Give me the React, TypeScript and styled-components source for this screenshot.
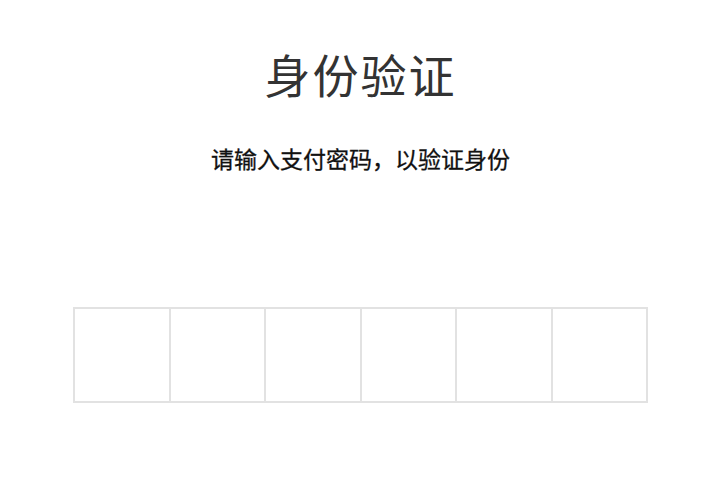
import React from "react";
import styled, { createGlobalStyle } from "styled-components";

const Global = createGlobalStyle`
  html, body { margin: 0; padding: 0; background: #fff; }
  body { font-family: "PingFang SC", "Noto Sans CJK SC", "Noto Sans", sans-serif; }
`;

const Page = styled.div`
  display: flex;
  flex-direction: column;
  align-items: center;
  padding: 46px 0 0 11px;
`;

const Title = styled.h1`
  margin: 0;
  font-size: 46px;
  line-height: 54px;
  font-weight: 400;
  color: #333;
  letter-spacing: 2px;
`;

const Subtitle = styled.p`
  margin: 42px 0 0;
  font-size: 23px;
  line-height: 32px;
  font-weight: 400;
  color: #111;
  -webkit-text-stroke: 0.3px #111;
`;

const Boxes = styled.div`
  margin-top: 133px;
  width: 575px;
  box-sizing: border-box;
  display: grid;
  grid-template-columns: repeat(6, 1fr);
  gap: 2px;
  padding: 2px;
  background: #e2e2e2;
`;

const Cell = styled.div`
  height: 92px;
  background: #fff;
`;

export default function App() {
  return (
    <>
      <Global />
      <Page>
        <Title>身份验证</Title>
        <Subtitle>请输入支付密码，以验证身份</Subtitle>
        <Boxes>
          {Array.from({ length: 6 }).map((_, i) => (
            <Cell key={i} />
          ))}
        </Boxes>
      </Page>
    </>
  );
}
